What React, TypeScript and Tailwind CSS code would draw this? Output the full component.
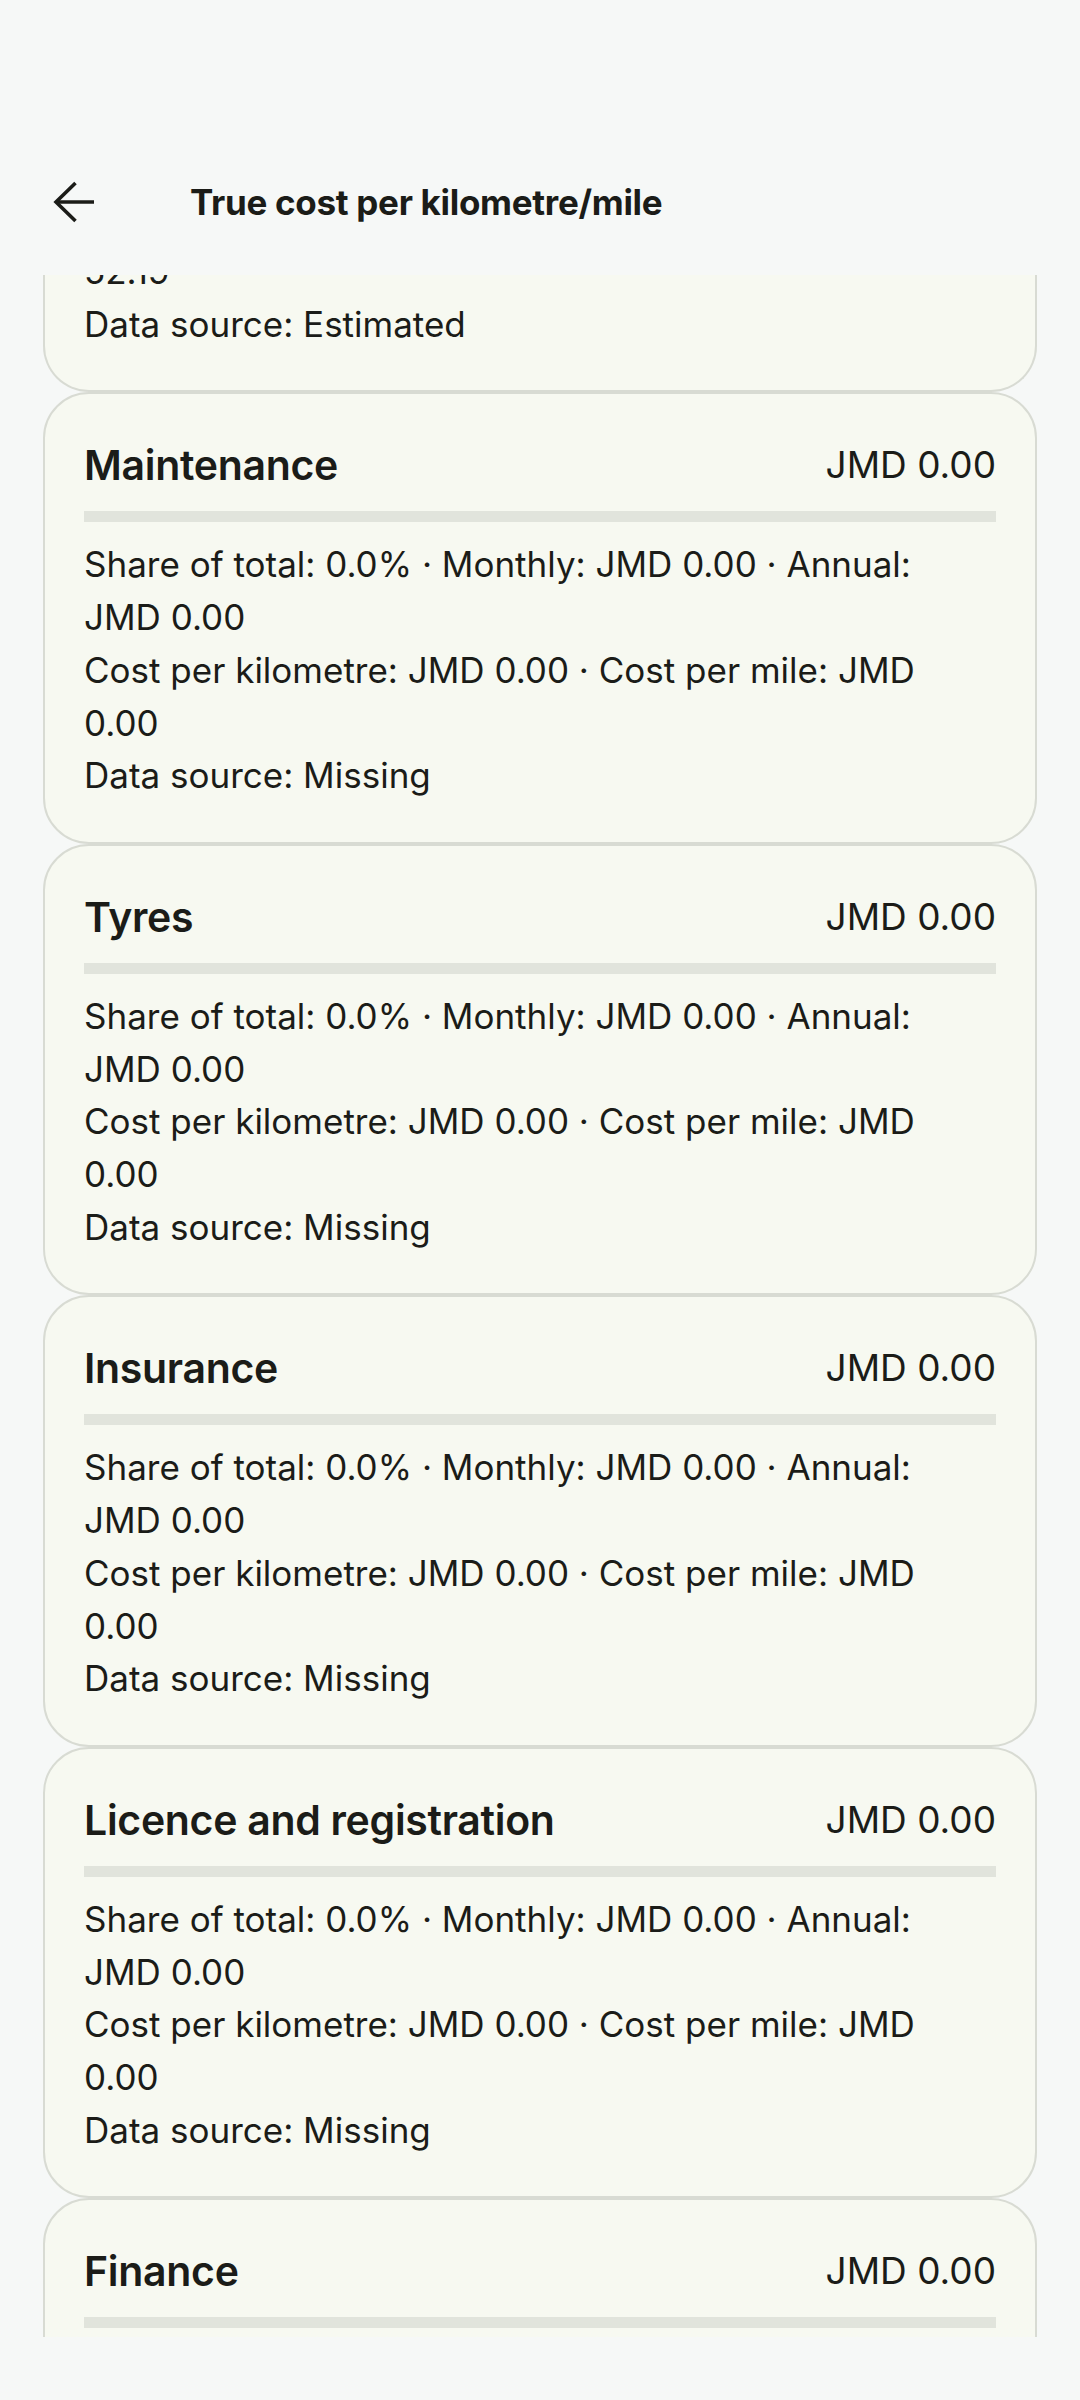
import React from "react";

type Item = {
  title: string;
  amount: string;
  lines: string[];
};

const missingLines = [
  "Share of total: 0.0% · Monthly: JMD 0.00 · Annual:",
  "JMD 0.00",
  "Cost per kilometre: JMD 0.00 · Cost per mile: JMD",
  "0.00",
  "Data source: Missing",
];

const items: Item[] = [
  { title: "Maintenance", amount: "JMD 0.00", lines: missingLines },
  { title: "Tyres", amount: "JMD 0.00", lines: missingLines },
  { title: "Insurance", amount: "JMD 0.00", lines: missingLines },
  { title: "Licence and registration", amount: "JMD 0.00", lines: missingLines },
  { title: "Finance", amount: "JMD 0.00", lines: missingLines },
];

function ArrowBack() {
  return (
    <svg width="42" height="42" viewBox="0 0 42 42" fill="none" stroke="#1b1c18" strokeWidth="3.6">
      <path d="M41 21H3" />
      <path d="M22.5 2L3 21l19.5 19" />
    </svg>
  );
}

function CostCard({ item }: { item: Item }) {
  return (
    <div className="border-[2.5px] border-[#d8dbd3] rounded-[46px] bg-[#f7f9f1] px-[39px] pt-[42px] pb-[40px]">
      <div className="flex items-center justify-between h-[58px]">
        <span className="text-[41px] font-semibold leading-[58px] whitespace-nowrap tracking-[-0.3px]">{item.title}</span>
        <span className="text-[37px] leading-[58px] whitespace-nowrap">{item.amount}</span>
      </div>
      <div className="mt-[17px] h-[11px] bg-[#e1e4dc]" />
      <div className="mt-[16px] text-[35px] leading-[52.7px]">
        {item.lines.map((line, i) => (
          <div key={i} className="whitespace-nowrap">
            {line}
          </div>
        ))}
      </div>
    </div>
  );
}

export default function App() {
  return (
    <div className="min-h-[2400px] bg-[#f6f8f7] text-[#1b1c18] font-['Inter','Noto_Sans',sans-serif]">
      {/* top app bar */}
      <header className="h-[275px] pt-[160px]">
        <div className="flex items-center h-[84px]">
          <button className="ml-[53px] w-[42px] h-[42px] flex items-center justify-center">
            <ArrowBack />
          </button>
          <h1 className="ml-[95px] text-[35px] font-bold tracking-[-0.3px]">True cost per kilometre/mile</h1>
        </div>
      </header>

      {/* scrolled list */}
      <main className="h-[2062px] overflow-hidden px-[43px]">
        {/* previous card, scrolled mostly out of view */}
        <div className="overflow-hidden border-x-[2.5px] border-b-[2.5px] border-[#d8dbd3] rounded-b-[46px] bg-[#f7f9f1] px-[39px] pb-[40px]">
          <div className="-mt-[30px] text-[35px] leading-[52.7px]">
            <div className="whitespace-nowrap">52.19</div>
            <div className="whitespace-nowrap">Data source: Estimated</div>
          </div>
        </div>
        {items.map((item) => (
          <CostCard key={item.title} item={item} />
        ))}
      </main>
    </div>
  );
}
